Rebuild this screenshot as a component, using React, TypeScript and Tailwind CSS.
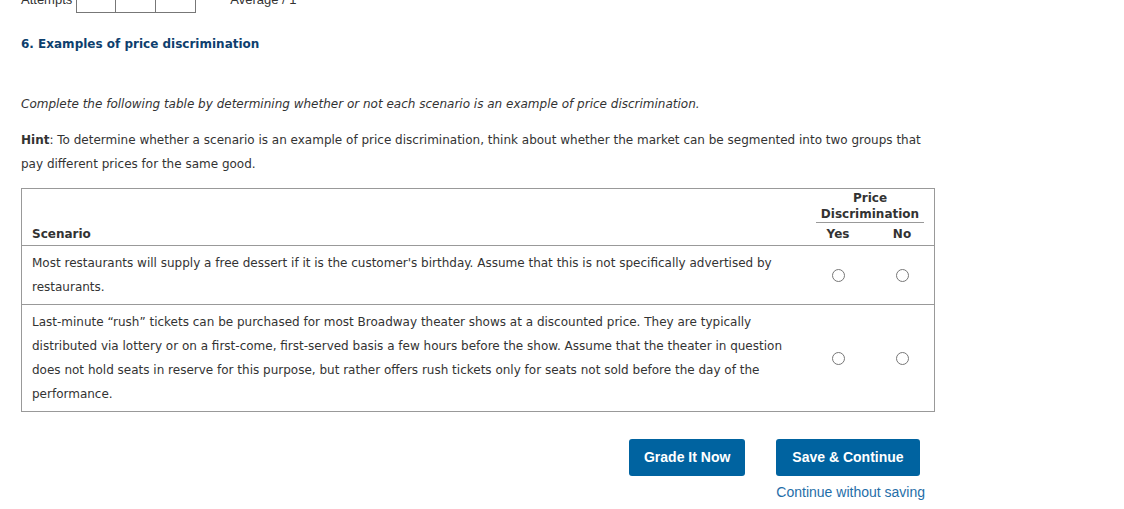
import React from 'react';

const rows = [
  {
    text: "Most restaurants will supply a free dessert if it is the customer's birthday. Assume that this is not specifically advertised by restaurants.",
  },
  {
    text: 'Last-minute \u201crush\u201d tickets can be purchased for most Broadway theater shows at a discounted price. They are typically distributed via lottery or on a first-come, first-served basis a few hours before the show. Assume that the theater in question does not hold seats in reserve for this purpose, but rather offers rush tickets only for seats not sold before the day of the performance.',
  },
];

const Radio = () => (
  <span className="inline-block w-[13px] h-[13px] rounded-full border border-[#777] bg-white align-middle" />
);

const App = () => {
  return (
    <div className="bg-white w-[1124px] h-[509px] overflow-hidden text-[#333] text-[12px]" style={{ fontFamily: '"DejaVu Sans", Verdana, sans-serif' }}>
      {/* score strip, cut off at the top */}
      <div className="flex items-end mt-[-17px] pl-[21px] h-[30px]" style={{ fontFamily: '"Liberation Sans", Arial, sans-serif' }}>
        <span className="text-[13px] leading-none mb-[7px]">Attempts</span>
        <div className="flex ml-[4px]">
          <div className="w-[40px] h-[28px] border border-[#777]" />
          <div className="w-[40px] h-[28px] border border-[#777] border-l-0" />
          <div className="w-[40px] h-[28px] border border-[#777] border-l-0" />
        </div>
        <span className="ml-[34px] text-[13px] leading-none mb-[7px]">Average / 1</span>
      </div>

      <div className="px-[21px]">
        <h2 className="mt-[23px] text-[12px] font-bold text-[#0e3f6e] leading-[16px]">6. Examples of price discrimination</h2>

        <p className="mt-[44px] italic leading-[16px]">Complete the following table by determining whether or not each scenario is an example of price discrimination.</p>

        <p className="mt-[16px] leading-[24px] w-[915px]">
          <b>Hint</b>: To determine whether a scenario is an example of price discrimination, think about whether the market can be segmented into two groups that pay different prices for the same good.
        </p>

        <table className="mt-[12px] w-[914px] border-collapse border border-[#999]">
          <thead>
            <tr className="border-b border-[#999]">
              <th className="text-left font-bold align-bottom pl-[10px] pb-[3px] leading-[16px]">Scenario</th>
              <th className="w-[128px] p-0 font-bold leading-[16px]">
                <div className="pt-[1px]">
                  <div className="mx-[10px] border-b border-[#999]">
                    <div>Price</div>
                    <div>Discrimination</div>
                  </div>
                  <div className="flex pt-[3px] pb-[3px]">
                    <span className="w-[64px] text-center">Yes</span>
                    <span className="w-[64px] text-center">No</span>
                  </div>
                </div>
              </th>
            </tr>
          </thead>
          <tbody>
            {rows.map((r, i) => (
              <tr key={i} className="border-b border-[#999]">
                <td className="pl-[10px] pr-[20px] py-[5px] leading-[24px] align-middle">{r.text}</td>
                <td className="p-0 align-middle">
                  <div className="flex">
                    <span className="w-[64px] flex justify-center"><Radio /></span>
                    <span className="w-[64px] flex justify-center"><Radio /></span>
                  </div>
                </td>
              </tr>
            ))}
          </tbody>
        </table>

        <div className="flex justify-end w-[904px] mt-[27px] gap-[31px]" style={{ fontFamily: '"Liberation Sans", Arial, sans-serif' }}>
          <div>
            <button className="h-[37px] px-[15px] rounded-[3px] bg-[#0063a0] text-white text-[14px] font-bold">Grade It Now</button>
          </div>
          <div className="flex flex-col items-start">
            <button className="h-[37px] px-[16px] rounded-[3px] bg-[#0063a0] text-white text-[14px] font-bold">Save &amp; Continue</button>
            <a className="mt-[8px] text-[14px] text-[#1f6ea8] leading-[16px]">Continue without saving</a>
          </div>
        </div>
      </div>
    </div>
  );
};

export default App;
